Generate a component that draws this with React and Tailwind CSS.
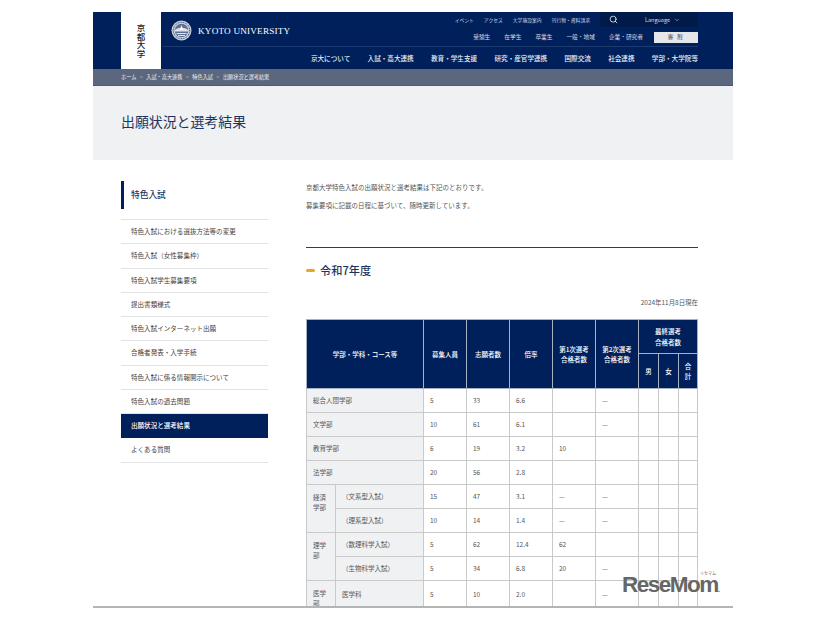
import React from 'react';
import { Search, ChevronDown } from 'lucide-react';

const jp = "font-['Noto_Sans_CJK_JP','Noto_Sans',sans-serif]";
const serif = "font-['Liberation_Serif',serif]";

const utilLinks = ['イベント', 'アクセス', '大学施設案内', '刊行物・資料請求'];
const audience = ['受験生', '在学生', '卒業生', '一般・地域', '企業・研究者'];
const mainNav = ['京大について', '入試・高大連携', '教育・学生支援', '研究・産官学連携', '国際交流', '社会連携', '学部・大学院等'];
const crumbs = ['ホーム', '入試・高大連携', '特色入試', '出願状況と選考結果'];
const sideItems = [
  '特色入試における選抜方法等の変更',
  '特色入試（女性募集枠）',
  '特色入試学生募集要項',
  '提出書類様式',
  '特色入試インターネット出願',
  '合格者発表・入学手続',
  '特色入試に係る情報開示について',
  '特色入試の過去問題',
  '出願状況と選考結果',
  'よくある質問',
];

const Crest = () => (
  <svg width="21" height="21" viewBox="0 0 42 42" fill="none" className="shrink-0">
    <circle cx="21" cy="21" r="20" fill="#c9d0dc" />
    <circle cx="21" cy="21" r="16.5" fill="none" stroke="#00205b" strokeWidth="1.5" strokeDasharray="2 1.5" />
    <circle cx="21" cy="21" r="13.5" fill="#5d6f92" />
    <path d="M8 20 C14 14 28 14 34 20 L34 23 L8 23 Z" fill="#dfe3ea" />
    <path d="M21 10 L24 19 L18 19 Z" fill="#ffffff" />
    <path d="M11 27 H31 M14 31 H28" stroke="#dfe3ea" strokeWidth="2" />
  </svg>
);

const Header = () => (
  <header className="flex h-[57px] bg-[#00205b] pl-[28px] pr-[35px]">
    <div className="flex h-full w-10 shrink-0 items-center justify-center bg-white">
      <span className={`${jp} text-[8.5px] font-medium leading-[10px] text-[#222] [writing-mode:vertical-rl]`}>京都大学</span>
    </div>
    <div className="flex min-w-0 flex-1 flex-col pl-[2px]">
      <div className="flex h-[35px] justify-between border-b border-[#1c3a70]">
        <div className="flex items-start gap-[6px] pl-2 pt-2">
          <Crest />
          <span className={`${serif} mt-[5px] text-[9.2px] leading-[12px] tracking-[0.02em] text-white`}>KYOTO UNIVERSITY</span>
        </div>
        <div className={`${jp} flex flex-col items-end`}>
          <div className="flex h-[15px] items-center text-[#d5dbe6]">
            <ul className="mr-[10px] flex gap-[10px] text-[4.8px]">
              {utilLinks.map((t) => <li key={t}>{t}</li>)}
            </ul>
            <div className="flex h-[15px] w-[27px] items-center justify-center bg-[#001a4a]">
              <Search size={9} strokeWidth={2} className="text-white" />
            </div>
            <div className="flex h-[15px] w-[71px] items-center justify-center gap-[4px] bg-[#001a4a] pt-[1px] text-[5.5px]">
              Language <ChevronDown size={6} />
            </div>
          </div>
          <div className="mt-[5px] flex items-center text-[#d5dbe6]">
            <ul className="mr-[11px] flex gap-[14px] text-[5.7px]">
              {audience.map((t) => <li key={t}>{t}</li>)}
            </ul>
            <div className="flex h-[11px] w-[44px] items-center justify-center bg-[#e6e7e9] text-[5.5px] tracking-[1.5px] text-[#333]">寄 附</div>
          </div>
        </div>
      </div>
      <nav className={`${jp} flex flex-1 items-center justify-end gap-[17.3px] pt-[1px] text-[6.6px] font-medium text-[#eef0f4]`}>
        {mainNav.map((t) => <a key={t}>{t}</a>)}
      </nav>
    </div>
  </header>
);

const Sidebar = () => (
  <aside className={`${jp} w-[147px] shrink-0`}>
    <div className="flex h-[28px] items-center border-l-[3px] border-[#00205b] pl-[7px] text-[8.7px] font-medium text-[#1c3560]">特色入試</div>
    <ul className="mt-[10px] border-t border-[#e2e3e5]">
      {sideItems.map((t) => (
        <li
          key={t}
          className={`flex h-[24.25px] items-center border-b pl-[10px] pt-[1px] text-[6.55px] ${
            t === '出願状況と選考結果'
              ? 'border-[#00205b] bg-[#00205b] font-medium text-white'
              : 'border-[#e2e3e5] text-[#444]'
          }`}
        >
          {t}
        </li>
      ))}
    </ul>
  </aside>
);

const rows = [
  { label: '総合人間学部', cells: ['5', '33', '6.6', '', '—'] },
  { label: '文学部', cells: ['10', '61', '6.1', '', '—'] },
  { label: '教育学部', cells: ['6', '19', '3.2', '10', ''] },
  { label: '法学部', cells: ['20', '56', '2.8', '', ''] },
  { group: '経済学部', span: 2, sub: '（文系型入試）', cells: ['15', '47', '3.1', '—', '—'] },
  { sub: '（理系型入試）', cells: ['10', '14', '1.4', '—', '—'] },
  { group: '理学部', span: 2, sub: '（数理科学入試）', cells: ['5', '62', '12.4', '62', ''] },
  { sub: '（生物科学入試）', cells: ['5', '34', '6.8', '20', '—'] },
  { group: '医学部', span: 2, sub: '医学科', cells: ['5', '10', '2.0', '', '—'] },
];

const th = 'border border-[#a9b2c4] bg-[#00205b] font-medium text-white leading-[10.5px]';
const td = 'h-[24px] border border-[#c9c9c9] pl-[6px] text-left text-[#555]';
const label = 'border border-[#c9c9c9] bg-[#f0f1f3] text-left text-[#555]';

const ResultTable = () => (
  <table className="w-[391px] table-fixed border-collapse text-[6.5px]">
    <colgroup>
      <col className="w-[29px]" />
      <col className="w-[88px]" />
      <col className="w-[43px]" />
      <col className="w-[43px]" />
      <col className="w-[43px]" />
      <col className="w-[43px]" />
      <col className="w-[43px]" />
      <col className="w-[20px]" />
      <col className="w-[20px]" />
      <col className="w-[19px]" />
    </colgroup>
    <thead>
      <tr className="h-[34px]">
        <th rowSpan={2} colSpan={2} className={th}>学部・学科・コース等</th>
        <th rowSpan={2} className={th}>募集人員</th>
        <th rowSpan={2} className={th}>志願者数</th>
        <th rowSpan={2} className={th}>倍率</th>
        <th rowSpan={2} className={th}>第1次選考<br />合格者数</th>
        <th rowSpan={2} className={th}>第2次選考<br />合格者数</th>
        <th colSpan={3} className={th}>最終選考<br />合格者数</th>
      </tr>
      <tr className="h-[35px]">
        <th className={th}>男</th>
        <th className={th}>女</th>
        <th className={th}>合<br />計</th>
      </tr>
    </thead>
    <tbody>
      {rows.map((r, i) => (
        <tr key={i} className="h-[24px]">
          {r.label && <td colSpan={2} className={`${label} pl-[6px]`}>{r.label}</td>}
          {r.group && (
            <td rowSpan={r.span} className={`${label} px-[6px] pt-[7px] align-top leading-[10px]`}>{r.group}</td>
          )}
          {r.sub && <td className={`${label} pl-[6px]`}>{r.sub}</td>}
          {r.cells.map((c, j) => <td key={j} className={td}>{c}</td>)}
          <td className={td} />
          <td className={td} />
          <td className={td} />
        </tr>
      ))}
    </tbody>
  </table>
);

const Main = () => (
  <main className={`${jp} w-[392px] shrink-0 text-[#555]`}>
    <p className="mt-[2px] text-[6.45px] leading-[10px] tracking-[0.01em]">京都大学特色入試の出願状況と選考結果は下記のとおりです。</p>
    <p className="mt-[8px] text-[6.45px] leading-[10px] tracking-[0.01em]">募集要項に記載の日程に基づいて、随時更新しています。</p>
    <div className="mt-[36px] border-t border-[#1c3f7a]" />
    <h2 className="mt-[14px] flex h-[17px] items-center gap-[5px] text-[11.2px] font-medium text-[#1c3560]">
      <span className="h-[3px] w-[9px] rounded-full bg-[#e3a82b]" />
      令和7年度
    </h2>
    <p className="mt-[19px] text-right text-[6.45px] leading-[10px]">2024年11月8日現在</p>
    <div className="mt-[11px]">
      <ResultTable />
    </div>
  </main>
);

export default function App() {
  return (
    <div className="relative h-[620px] w-[826px] overflow-hidden bg-white pl-[93px] pt-3">
      <div className="h-[596px] w-[640px] overflow-hidden border-b-2 border-[#b5b5b5]">
        <Header />
        <nav className={`${jp} flex h-[17px] items-center gap-[3.6px] border-b border-[#4c5a75] bg-[#5b677e] pl-[28px] text-[5.15px] text-[#f2f3f6]`}>
          {crumbs.map((t, i) => (
            <React.Fragment key={t}>
              {i > 0 && <span className="text-[#c8ccd6]">&gt;</span>}
              <span>{t}</span>
            </React.Fragment>
          ))}
        </nav>
        <div className={`${jp} flex h-[74px] items-center bg-[#f0f1f3] pb-[3px] pl-[28px] text-[13.9px] text-[#1c3560]`}>
          出願状況と選考結果
        </div>
        <div className="flex gap-[38px] pl-[28px] pt-[21px]">
          <Sidebar />
          <Main />
        </div>
      </div>
      <span className={`${jp} absolute left-[700px] top-[571px] text-[4px] leading-[5px] text-[#666]`}>リセマム</span>
      <span className="absolute left-[622px] top-[574px] font-['Liberation_Sans',sans-serif] text-[22.5px] font-bold leading-[22px] tracking-[-1.5px] text-[#666]">ReseMom<span className="text-[8px]">.</span></span>
    </div>
  );
}
